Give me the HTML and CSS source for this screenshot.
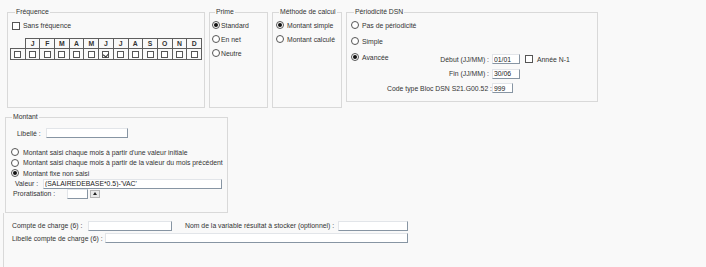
FILE: index.html
```html
<!DOCTYPE html>
<html lang="fr">
<head>
    <meta charset="UTF-8">
    <meta name="viewport" content="width=device-width, initial-scale=1.0">
    <title>Rubrique de paie</title>
    <link rel="stylesheet" href="styles.css">
</head>
<body>
    <div class="page">
        <div class="top">
            <!-- Fréquence -->
            <fieldset class="grp freq">
                <legend>Fréquence</legend>
                <label class="opt"><span class="cb"></span>Sans fréquence</label>
                <table class="months">
                    <tr>
                        <th></th><th>J</th><th>F</th><th>M</th><th>A</th><th>M</th><th>J</th>
                        <th>J</th><th>A</th><th>S</th><th>O</th><th>N</th><th>D</th>
                    </tr>
                    <tr>
                        <td><span class="cb"></span></td>
                        <td><span class="cb"></span></td>
                        <td><span class="cb"></span></td>
                        <td><span class="cb"></span></td>
                        <td><span class="cb"></span></td>
                        <td><span class="cb"></span></td>
                        <td><span class="cb on"></span></td>
                        <td><span class="cb"></span></td>
                        <td><span class="cb"></span></td>
                        <td><span class="cb"></span></td>
                        <td><span class="cb"></span></td>
                        <td><span class="cb"></span></td>
                        <td><span class="cb"></span></td>
                    </tr>
                </table>
            </fieldset>

            <!-- Prime -->
            <fieldset class="grp prime">
                <legend>Prime</legend>
                <label class="opt"><span class="rd on"></span>Standard</label>
                <label class="opt"><span class="rd"></span>En net</label>
                <label class="opt"><span class="rd"></span>Neutre</label>
            </fieldset>

            <!-- Méthode de calcul -->
            <fieldset class="grp methode">
                <legend>Méthode de calcul</legend>
                <label class="opt"><span class="rd on"></span>Montant simple</label>
                <label class="opt"><span class="rd"></span>Montant calculé</label>
            </fieldset>

            <!-- Périodicité DSN -->
            <fieldset class="grp dsn">
                <legend>Périodicité DSN</legend>
                <label class="opt"><span class="rd"></span>Pas de périodicité</label>
                <label class="opt"><span class="rd"></span>Simple</label>
                <div class="adv">
                    <label class="opt"><span class="rd on"></span>Avancée</label>
                    <div class="dsn-fields">
                        <span class="lbl">Début (JJ/MM) :</span>
                        <input class="fld" type="text" value="01/01">
                        <label class="opt annee"><span class="cb"></span>Année N-1</label>

                        <span class="lbl">Fin (JJ/MM) :</span>
                        <input class="fld" type="text" value="30/06">
                        <span></span>

                        <span class="lbl">Code type Bloc DSN S21.G00.52 :</span>
                        <input class="fld code" type="text" value="999">
                        <span></span>
                    </div>
                </div>
            </fieldset>
        </div>

        <!-- Montant -->
        <fieldset class="grp montant">
            <legend>Montant</legend>
            <div class="row libelle">
                <span class="lbl">Libellé :</span>
                <input class="fld" type="text" value="">
            </div>
            <div class="choices">
                <label class="opt"><span class="rd"></span>Montant saisi chaque mois à partir d'une valeur initiale</label>
                <label class="opt"><span class="rd"></span>Montant saisi chaque mois à partir de la valeur du mois précédent</label>
                <label class="opt"><span class="rd on"></span>Montant fixe non saisi</label>
            </div>
            <div class="row valeur">
                <span class="lbl">Valeur :</span>
                <input class="fld" type="text" value="(SALAIREDEBASE*0.5)-'VAC'">
            </div>
            <div class="row prorata">
                <span class="lbl">Proratisation :</span>
                <input class="fld" type="text" value="">
                <span class="spin"></span>
            </div>
        </fieldset>

        <!-- Compte de charge -->
        <div class="bottom">
            <div class="row">
                <span class="lbl compte">Compte de charge (6) :</span>
                <input class="fld compte-fld" type="text" value="">
                <span class="lbl variable">Nom de la variable résultat à stocker (optionnel) :</span>
                <input class="fld variable-fld" type="text" value="">
            </div>
            <div class="row">
                <span class="lbl libelle-compte">Libellé compte de charge (6) :</span>
                <input class="fld libelle-fld" type="text" value="">
            </div>
        </div>
    </div>
</body>
</html>
```

FILE: styles.css
```css
* {
    box-sizing: border-box;
    margin: 0;
    padding: 0;
}

body {
    font-family: 'Liberation Sans', Arial, sans-serif;
    font-size: 6.85px;
    color: #333;
    background-color: #f9f9f9;
}

.page {
    height: 267px;
    overflow: hidden;
}

/* group boxes */
.grp {
    border: 1px solid #d9d9d9;
    min-width: 0;
}

.grp legend {
    margin-left: 3px;
    padding: 0 1px;
    line-height: 8px;
}

.top {
    display: flex;
    align-items: flex-start;
    padding: 8px 0 0 7px;
}

.freq {
    width: 198px;
    height: 100px;
    padding: 4px 0 0 4px;
}

.prime {
    width: 59px;
    height: 100px;
    margin-left: 4px;
    padding: 2px 0 0 2px;
}

.methode {
    width: 70px;
    height: 100px;
    margin-left: 4px;
    padding: 2px 0 0 3px;
}

.dsn {
    width: 252px;
    height: 94px;
    margin-left: 4px;
    padding: 1px 0 0 4px;
}

/* options */
.opt {
    display: flex;
    align-items: center;
    white-space: nowrap;
}

.freq > .opt {
    height: 11px;
}

.prime .opt,
.methode .opt {
    height: 14px;
}

.dsn .opt {
    height: 16px;
}

.rd {
    flex: none;
    display: flex;
    align-items: center;
    justify-content: center;
    width: 8px;
    height: 8px;
    margin-right: 3px;
    border: 1px solid #555;
    border-radius: 50%;
    background-color: #fff;
}

.prime .rd {
    margin-right: 1px;
}

.rd.on::after {
    content: "";
    width: 4px;
    height: 4px;
    border-radius: 50%;
    background-color: #111;
}

.cb {
    flex: none;
    display: inline-block;
    position: relative;
    width: 8px;
    height: 8px;
    margin-right: 3px;
    border: 1px solid #555;
    background-color: #fff;
}

.cb.on::after {
    content: "";
    position: absolute;
    left: 1px;
    top: 0;
    width: 3px;
    height: 4px;
    border: solid #333;
    border-width: 0 1px 1px 0;
    transform: rotate(40deg);
}

/* months grid */
.months {
    margin: 7px 0 0 -2px;
    width: 192px;
    table-layout: fixed;
    border-collapse: collapse;
}

.months th,
.months td {
    border: 1px solid #5e5e5e;
    text-align: center;
    padding: 0;
}

.months th {
    height: 10px;
    font-weight: bold;
    line-height: 7px;
}

.months th:first-child {
    border-top: none;
    border-left: none;
}

.months td {
    height: 11px;
    line-height: 0;
}

.months .cb {
    width: 7px;
    height: 7px;
    margin: 0;
    vertical-align: middle;
}

/* text fields */
.fld {
    height: 10px;
    padding: 0 1px;
    font: inherit;
    color: #222;
    background-color: #fff;
    border: 1px solid;
    border-color: #e2e5e9 #8795a3 #8795a3 #e2e5e9;
    outline: none;
}

.lbl {
    white-space: nowrap;
}

/* periodicité avancée */
.adv {
    display: flex;
    align-items: flex-start;
}

.adv > .opt {
    width: 36px;
}

.dsn-fields {
    display: grid;
    grid-template-columns: 102px 28px auto;
    grid-auto-rows: 10px;
    column-gap: 3px;
    row-gap: 4.5px;
    align-items: center;
    margin-top: 5px;
}

.dsn-fields .lbl {
    text-align: right;
}

.dsn-fields .fld {
    width: 28px;
}

.dsn-fields .fld.code {
    width: 21px;
}

.dsn .annee {
    height: 10px;
    margin-left: 2px;
}

.annee .cb {
    margin-right: 4px;
}

/* montant */
.montant {
    width: 223px;
    height: 100px;
    margin: 5px 0 0 5px;
    padding: 0;
}

.montant legend {
    margin-left: 6px;
}

.row {
    display: flex;
    align-items: center;
    height: 10px;
}

.libelle {
    margin-top: 7px;
    padding-left: 11px;
}

.libelle .lbl {
    width: 29px;
}

.libelle .fld {
    width: 82px;
}

.choices {
    margin-top: 9px;
    padding-left: 5px;
}

.choices .opt {
    height: 10.5px;
}

.choices .rd {
    margin-right: 4px;
}

.valeur {
    padding-left: 9px;
}

.valeur .lbl {
    width: 28px;
}

.valeur .fld {
    width: 179px;
}

.prorata {
    padding-left: 7px;
}

.prorata .lbl {
    width: 54px;
}

.prorata .fld {
    width: 21px;
}

.spin {
    display: flex;
    align-items: center;
    justify-content: center;
    width: 10px;
    height: 8px;
    margin-left: 2px;
    background-color: #e9e9e9;
    border: 1px solid #b5b5b5;
}

.spin::after {
    content: "";
    border: 2px solid transparent;
    border-top: none;
    border-bottom: 3px solid #222;
}

/* compte de charge */
.bottom {
    height: 54px;
    margin-left: 3px;
    padding: 7.5px 0 0 8px;
    border-left: 1px solid #d9d9d9;
}

.bottom .row + .row {
    margin-top: 2.5px;
}

.compte {
    width: 76px;
}

.compte-fld {
    width: 84px;
}

.variable {
    width: 153px;
    margin-left: 13px;
}

.variable-fld {
    width: 70px;
}

.libelle-compte {
    width: 93px;
}

.libelle-fld {
    width: 303px;
}
```
